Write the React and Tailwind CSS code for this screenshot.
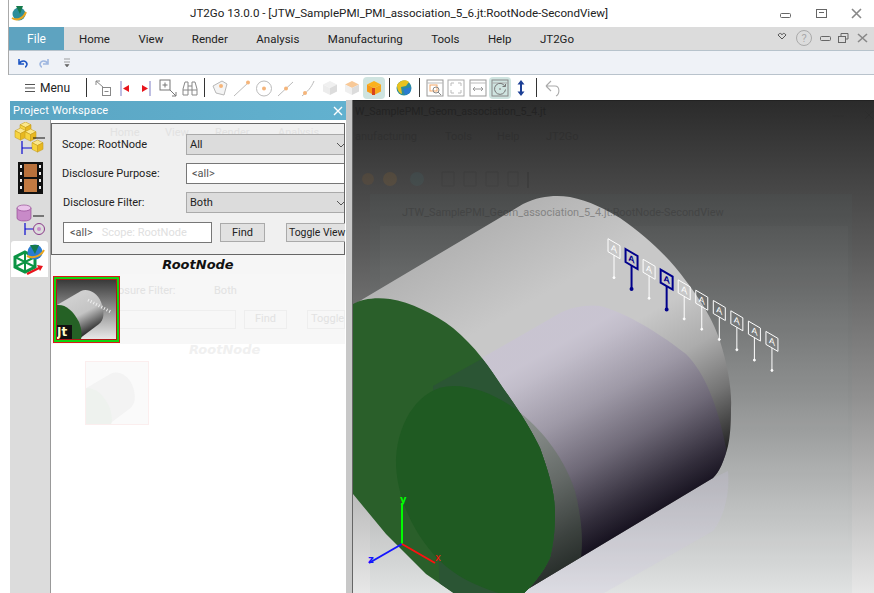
import React from "react";

const tabs = ["Home", "View", "Render", "Analysis", "Manufacturing", "Tools", "Help", "JT2Go"];

function Sep() {
  return <div className="w-px h-[19px] bg-[#333] shrink-0" />;
}

function Tool({ w = 22, active, children, className = "" }) {
  return (
    <div
      className={`h-[22px] shrink-0 flex items-center justify-center rounded-sm ${active ? "bg-[#cfe4e0]" : ""} ${className}`}
      style={{ width: w }}
    >
      <svg width="20" height="20" viewBox="0 0 20 20" fill="none">
        {children}
      </svg>
    </div>
  );
}

function Box({ top, side, front }) {
  return (
    <>
      <path d="M10 3 L17 6.5 L10 10 L3 6.5 Z" fill={top} />
      <path d="M3 6.5 L10 10 V17 L3 13.5 Z" fill={side} />
      <path d="M17 6.5 L10 10 V17 L17 13.5 Z" fill={front} />
    </>
  );
}

function Toolbar() {
  return (
    <div className="h-[25px] bg-white flex items-center pl-[25px] shrink-0">
      <svg width="10" height="10" viewBox="0 0 10 10" className="shrink-0">
        <path d="M0 1.5H10M0 5H10M0 8.5H10" stroke="#555" strokeWidth="1.1" />
      </svg>
      <span className="ml-[5px] w-[40px] text-[12px] text-[#222] shrink-0">Menu</span>
      <div className="ml-[6px]"><Sep /></div>
      <Tool className="ml-[5px]">
        <path d="M3 3l7 6M3 3h4M3 3v4" stroke="#888" strokeWidth="1" />
        <rect x="9.5" y="9.5" width="8" height="8" stroke="#888" />
        <path d="M11.5 13.5h4" stroke="#888" />
      </Tool>
      <Tool className="ml-px">
        <path d="M5 3v15" stroke="#a8a8d8" strokeWidth="1.5" />
        <path d="M13 7v7l-6-3.5z" fill="#e8141c" />
      </Tool>
      <Tool className="-ml-[3px]">
        <path d="M15 3v15" stroke="#a8a8d8" strokeWidth="1.5" />
        <path d="M7 7v7l6-3.5z" fill="#e8141c" />
      </Tool>
      <Tool w={23}>
        <rect x="2" y="2" width="10" height="10" stroke="#777" />
        <path d="M7 4.5v5M4.5 7h5M12 12l6 6M18 14v4h-4" stroke="#777" />
      </Tool>
      <Tool>
        <path d="M3 17v-6l2-7h3v13zM17 17v-6l-2-7h-3v13zM8 8h4M8 12h4M3 12h5M12 12h5" stroke="#888" />
      </Tool>
      <div className="ml-[3px]"><Sep /></div>
      <Tool className="ml-[4px]">
        <path d="M3 8l9-5 5 3-3 11-8-2z" stroke="#b8b8b8" fill="#f4f4f4" />
        <circle cx="11" cy="8" r="2" fill="#f5b57a" />
      </Tool>
      <Tool>
        <path d="M2 18L17 4" stroke="#bbb" />
        <circle cx="16" cy="4.5" r="2" fill="#f5b57a" />
      </Tool>
      <Tool>
        <circle cx="10" cy="10.5" r="7.5" stroke="#bbb" />
        <circle cx="10" cy="10.5" r="2" fill="#f5b57a" />
      </Tool>
      <Tool>
        <path d="M2 18L17 4" stroke="#bbb" />
        <circle cx="10" cy="10.5" r="2" fill="#f5b57a" />
      </Tool>
      <Tool>
        <path d="M4 18C10 13 13 10 16 3" stroke="#bbb" />
        <circle cx="7" cy="15" r="2" fill="#f5b57a" />
      </Tool>
      <Tool><Box top="#f0f0f0" side="#ececec" front="#dcdcdc" /></Tool>
      <Tool><Box top="#f8c998" side="#efefef" front="#dcdcdc" /></Tool>
      <Tool active>
        <path d="M10 3 L17 6.5 L10 10 L3 6.5 Z" fill="#fbb11f" />
        <path d="M3 6.5 L10 10 V17 L3 13.5 Z" fill="#f89a18" />
        <path d="M17 6.5 L10 10 V17 L17 13.5 Z" fill="#f7a81d" />
        <path d="M8 10v7h3v-7z" fill="#d8431c" />
      </Tool>
      <div className="ml-[4px]"><Sep /></div>
      <Tool className="ml-[3px]">
        <circle cx="10" cy="10" r="7.5" fill="#2d8e9a" />
        <path d="M3 7c3-5 9-6 12-3l-3 4-5 1 1 7c-3-1-5-4-5-9z" fill="#e8c21f" />
        <path d="M9 11l8-2-1 6-5 2z" fill="#2a7bd0" />
      </Tool>
      <div className="ml-[4px]"><Sep /></div>
      <Tool className="ml-[4px]">
        <rect x="2" y="2" width="16" height="16" stroke="#999" />
        <path d="M2 5h16" stroke="#bbb" />
        <rect x="5" y="7" width="7" height="6" stroke="#f4a868" />
        <circle cx="11" cy="12" r="3" stroke="#888" />
        <path d="M13 14l3 3" stroke="#888" />
      </Tool>
      <Tool className="-ml-px">
        <rect x="2" y="2" width="16" height="16" stroke="#aaa" />
        <path d="M5 8V5h3M15 8V5h-3M5 12v3h3M15 12v3h-3" stroke="#bbb" />
      </Tool>
      <Tool>
        <rect x="2" y="2" width="16" height="16" stroke="#999" />
        <path d="M2 5h16" stroke="#bbb" />
        <path d="M5 11h10M5 11l2-2M5 11l2 2M15 11l-2-2M15 11l-2 2" stroke="#999" />
      </Tool>
      <Tool active>
        <rect x="2" y="2" width="16" height="16" stroke="#888" />
        <path d="M2 5h16" stroke="#aaa" />
        <path d="M15 8.5a5.5 5.5 0 1 0 .5 3" stroke="#777" />
        <path d="M12.5 8.5H15.5V6" stroke="#777" />
        <circle cx="10" cy="11" r="1" fill="#999" />
      </Tool>
      <Tool className="-ml-px">
        <path d="M10 4v12" stroke="#1c3f95" strokeWidth="2" />
        <path d="M6.5 6.5L10 2l3.5 4.5zM6.5 13.5L10 18l3.5-4.5z" fill="#1c3f95" />
      </Tool>
      <div className="ml-[4px]"><Sep /></div>
      <Tool className="ml-[5px]">
        <path d="M3 8l5-5M3 8l5 5M3 8h9c5 0 5 8 1 10" stroke="#aaa" strokeWidth="1.1" />
      </Tool>
    </div>
  );
}

function Cube({ x, y, s }) {
  // small yellow isometric cube
  return (
    <g transform={`translate(${x} ${y}) scale(${s})`} stroke="#c49a1a" strokeWidth=".5">
      <path d="M0 2.5L5 0l5 2.5L5 5z" fill="#fbe78a" />
      <path d="M0 2.5L5 5v6L0 8.5z" fill="#f7d440" />
      <path d="M10 2.5L5 5v6l5-2.5z" fill="#e8b820" />
    </g>
  );
}

function Sidebar() {
  return (
    <div className="w-[41px] shrink-0 bg-[#dcdcdc] border-r border-[#999] flex flex-col pt-[2px] items-center">
      <svg width="32" height="33" viewBox="0 0 32 33">
        <Cube x={6} y={0} s={1.1} />
        <Cube x={1} y={6} s={1.1} />
        <Cube x={11} y={7} s={1.1} />
        <Cube x={18} y={18} s={1.1} />
        <path d="M8 19v13M8 26h10" stroke="#0a0ad0" strokeWidth="1.2" />
        <path d="M19 16h12" stroke="#111" strokeWidth="1" />
      </svg>
      <svg width="25" height="32" viewBox="0 0 25 32" className="mt-[7px]">
        <rect width="25" height="32" fill="#111" />
        <rect x="6" y="2" width="13" height="13" fill="#b8713c" />
        <rect x="6" y="17" width="13" height="13" fill="#c27a42" />
        <path d="M2 3h2v3H2zM2 10h2v3H2zM2 17h2v3H2zM2 24h2v3H2zM21 3h2v3h-2zM21 10h2v3h-2zM21 17h2v3h-2zM21 24h2v3h-2z" fill="#eee" />
      </svg>
      <svg width="32" height="34" viewBox="0 0 32 34" className="mt-[9px]">
        <path d="M3 5v10c0 4 14 4 14 0V5z" fill="#c88ac8" stroke="#8a3a8a" strokeWidth=".6" />
        <ellipse cx="10" cy="5" rx="7" ry="3" fill="#eac4ea" stroke="#8a3a8a" strokeWidth=".6" />
        <path d="M11 20v12M11 26h8" stroke="#0a0ad0" strokeWidth="1.2" />
        <path d="M19 13h11" stroke="#111" />
        <circle cx="25" cy="26" r="5.5" fill="none" stroke="#8a3a8a" />
        <circle cx="25" cy="26" r="2" fill="#c88ac8" />
      </svg>
      <div className="mt-[4px] w-[37px] h-[36px] bg-white rounded-t-[3px] flex items-center justify-center self-start ml-[1px]">
        <svg width="33" height="34" viewBox="0 0 33 34">
          <path d="M12 10l10 5v10l-10 5-10-5V15z" fill="none" stroke="#0b9444" strokeWidth="3" />
          <path d="M2 15l20 10M22 15L2 25M12 10v20" stroke="#0b9444" strokeWidth="2" />
          <circle cx="22" cy="10" r="7.5" fill="#2a7bd0" />
          <path d="M17 3h9l-4 9z" fill="#157a4c" />
          <path d="M14 14c6 3 14 0 17-6" stroke="#e8a51f" strokeWidth="2" fill="none" />
          <path d="M14 32l12-6" stroke="#e8141c" strokeWidth="2.5" />
          <path d="M24 23l6 1-3 5z" fill="#e8141c" />
        </svg>
      </div>
    </div>
  );
}

function Thumb() {
  return (
    <div className="w-[67px] h-[67px] ml-[2px] mt-[2px] border border-[#d81818] relative">
      <div className="w-full h-full border-2 border-[#0fd40f]">
        <div className="w-full h-full border border-[#b01818] relative overflow-hidden">
          <svg width="59" height="59" viewBox="0 0 59 59" className="block">
            <defs>
              <linearGradient id="tb" x1="0" y1="0" x2="0" y2="1">
                <stop offset="0" stopColor="#3a3a3a" />
                <stop offset="1" stopColor="#e8e8e8" />
              </linearGradient>
              <linearGradient id="tc" x1="0.3" y1="0.1" x2="0.7" y2="0.9">
                <stop offset="0.1" stopColor="#cfcfcf" />
                <stop offset="0.5" stopColor="#c4c4c4" />
                <stop offset="1" stopColor="#222" />
              </linearGradient>
            </defs>
            <rect width="59" height="59" fill="url(#tb)" />
            <path d="M0 25L24 11C30 8 40 12 44 22 C48 32 47 40 42 44L22 59H0Z" fill="url(#tc)" />
            <path d="M0 25C8 24 16 30 22 42 C25 50 25 56 24 59H0Z" fill="#256125" />
            <path d="M31 20L54 32" stroke="#eee" strokeWidth="3" strokeDasharray="1 2" />
          </svg>
          <div className="absolute left-0 bottom-0 w-[15px] h-[14px] bg-[#111] text-[12px] leading-[14px] font-bold text-[#ffffc8] font-['DejaVu_Sans',sans-serif]">Jt</div>
        </div>
      </div>
    </div>
  );
}

function Panel() {
  return (
    <div className="w-[336px] shrink-0 flex flex-col">
      <div className="h-[19px] mt-px bg-gradient-to-r from-[#5aa5c3] to-[#62b1cf] text-white text-[11px] flex items-center justify-between pl-[3px] pr-[3px] shrink-0 tracking-[0.2px]">
        <span className="pt-px">Project Workspace</span>
        <svg width="10" height="10" viewBox="0 0 10 10"><path d="M1 1l8 8M9 1l-8 8" stroke="#fff" strokeWidth="1.4" /></svg>
      </div>
      <div className="flex-1 flex min-h-0">
        <Sidebar />
        <div className="flex-1 bg-white relative">
          <div className="mt-[3px] w-[294px] h-[132px] bg-[#f0f0f0] border border-[#666] text-[11px] text-[#222] relative z-10">
            <span className="absolute left-[58px] top-[3px] leading-none text-[#e2e2e2]">Home</span>
            <span className="absolute left-[113px] top-[3px] leading-none text-[#e2e2e2]">View</span>
            <span className="absolute left-[163px] top-[3px] leading-none text-[#e2e2e2]">Render</span>
            <span className="absolute left-[226px] top-[3px] leading-none text-[#e2e2e2]">Analysis</span>
            <div className="flex items-center mt-[10px] pl-[10px] relative">
              <span className="w-[124px] leading-none">Scope: RootNode</span>
              <div className="flex-1 h-[21px] bg-[#dcdcdc] border border-[#aaa] border-r-0 pl-[3px] pt-px flex items-center justify-between overflow-hidden">
                All
                <svg width="7" height="5" viewBox="0 0 7 5" className="shrink-0"><path d="M0 0l4 4 3-3" stroke="#555" fill="none" /></svg>
              </div>
            </div>
            <div className="flex items-center mt-[8px] pl-[10px] relative">
              <span className="w-[124px] pt-px">Disclosure Purpose:</span>
              <div className="flex-1 h-[21px] bg-white border border-[#777] border-r-0 pl-[5px] pt-px flex items-center text-[#555]">&lt;all&gt;</div>
            </div>
            <div className="flex items-center mt-[8px] pl-[11px] relative">
              <span className="w-[123px] pt-[2px]">Disclosure Filter:</span>
              <div className="flex-1 h-[21px] bg-[#dcdcdc] border border-[#aaa] border-r-0 pl-[3px] pt-px flex items-center justify-between overflow-hidden">
                Both
                <svg width="7" height="5" viewBox="0 0 7 5" className="shrink-0"><path d="M0 0l4 4 3-3" stroke="#555" fill="none" /></svg>
              </div>
            </div>
            <div className="flex items-center mt-[9px] pl-[11px] relative">
              <div className="w-[149px] shrink-0 h-[21px] bg-white border border-[#777] pl-[6px] pt-px flex items-center text-[#555] gap-[9px] whitespace-nowrap">
                &lt;all&gt;<span className="text-[#e0e0e0]">Scope: RootNode</span>
              </div>
              <div className="ml-[8px] w-[45px] shrink-0 h-[19px] bg-[#e1e1e1] border border-[#aaa] pt-px flex items-center justify-center">Find</div>
              <div className="ml-[21px] flex-1 h-[19px] bg-[#e1e1e1] border border-[#aaa] border-r-0 pl-[2px] pt-px flex items-center whitespace-nowrap text-[10.4px]">Toggle View</div>
            </div>
          </div>
          <div className="h-[19px] w-[294px] bg-[#f6f6f6] flex items-center justify-center text-[13px] font-bold italic text-[#111] font-['DejaVu_Sans',sans-serif] relative z-10">RootNode</div>
          <div className="relative z-10"><Thumb /></div>
          <Ghost />
        </div>
      </div>
    </div>
  );
}

// faint copy of the other window showing through the panel
function Ghost() {
  return (
    <div className="absolute left-0 top-[154px] w-[294px] h-[70px] bg-[#f7f7f7] text-[11px] text-[#e2e2e2]">
      <span className="absolute left-[43px] top-[9px]">Disclosure Filter:</span>
      <span className="absolute left-[163px] top-[9px]">Both</span>
      <div className="absolute left-[51px] top-[36px] w-[134px] h-[19px] border border-[#eee]" />
      <div className="absolute left-[193px] top-[36px] w-[43px] h-[19px] border border-[#eee] flex items-center justify-center">Find</div>
      <div className="absolute left-[256px] top-[36px] w-[38px] h-[19px] border border-[#eee] pl-[3px] flex items-center">Toggle</div>
      <span className="absolute left-[138px] top-[66px] text-[13px] font-bold italic text-[#f0f0f0] font-['DejaVu_Sans',sans-serif]">RootNode</span>
      <div className="absolute left-[34px] top-[87px] w-[64px] h-[64px] border border-[#fbeeee] bg-[#fafafa] overflow-hidden">
        <svg width="62" height="62" viewBox="0 0 59 59" className="block">
          <path d="M0 25L24 11C30 8 40 12 44 22 C48 32 47 40 42 44L22 59H0Z" fill="#f3f3f3" />
          <path d="M0 25C8 24 16 30 22 42 C25 50 25 56 24 59H0Z" fill="#eef2ee" />
        </svg>
      </div>
    </div>
  );
}

const markers = [0, 1, 2, 3, 4, 5, 6, 7, 8, 9];

const bodyPath =
  "M353 304L363 298L523 203C540 195 555 194 570 196C590 200 605 208 620 217C650 238 670 258 686 280C705 305 714 322 720 340C728 365 732 390 731 407C731 425 730 435 728 445C724 460 720 470 713 477L523 591L440 420Z";
const greenPath =
  "M353 303C362 298 375 296 390 298C410 301 435 313 453 327C475 345 490 367 503 387C520 410 532 430 540 447C548 470 555 490 555 513C555 530 553 545 550 557C543 572 532 585 523 593H455L426 573L386 533L353 493Z";
const ghostCap =
  "M453 385C420 385 398 420 396 457C395 490 410 530 440 560C470 590 540 610 570 590C585 565 585 530 575 490C555 430 500 385 453 385Z";

function Scene() {
  return (
    <svg width="521" height="493" viewBox="353 100 521 493" className="block">
      <defs>
        <linearGradient id="bg" x1="0" y1="0" x2="0" y2="1">
          <stop offset="0" stopColor="#2b2b2b" />
          <stop offset="0.3" stopColor="#5a5a5a" />
          <stop offset="0.6" stopColor="#909090" />
          <stop offset="1" stopColor="#e8e8e8" />
        </linearGradient>
        <linearGradient id="body" gradientUnits="userSpaceOnUse" x1="450" y1="250" x2="616" y2="544">
          <stop offset="0" stopColor="#b4b4b4" />
          <stop offset="0.25" stopColor="#c8c8c8" />
          <stop offset="0.45" stopColor="#c8c8c8" />
          <stop offset="0.6" stopColor="#acacac" />
          <stop offset="0.75" stopColor="#747474" />
          <stop offset="0.9" stopColor="#2a2a2a" />
          <stop offset="1" stopColor="#040404" />
        </linearGradient>
        <linearGradient id="ghost" gradientUnits="userSpaceOnUse" x1="450" y1="250" x2="616" y2="544">
          <stop offset="0.4" stopColor="#c9c1d8" />
          <stop offset="0.75" stopColor="#6a607a" />
          <stop offset="1" stopColor="#181028" />
        </linearGradient>
        <clipPath id="bodyClip"><path d={bodyPath} /></clipPath>
        <clipPath id="greenClip"><path d={greenPath} /></clipPath>
      </defs>
      <rect x="353" y="100" width="521" height="493" fill="url(#bg)" />
      <rect x="370" y="193" width="482" height="400" fill="#6a8a90" opacity="0.05" />
      <rect x="380" y="225" width="468" height="368" fill="#ffffff" opacity="0.02" />
      <path d="M713 477L728 470C730 490 725 515 713 530L590 600H560L523 591Z" fill="#cdc6e2" opacity="0.22" />
      <path d={bodyPath} fill="url(#body)" />
      <g clipPath="url(#bodyClip)">
        <path d="M433 385L560 312C570 306 590 303 600 305C620 310 650 325 686 353C705 372 718 405 726 447C728 470 722 490 713 498L586 570L560 600H440Z" fill="url(#ghost)" opacity="0.55" />
        <path d={ghostCap} fill="#4f6a48" opacity="0.35" />
      </g>
      <path d={greenPath} fill="#2a5f2a" />
      <g clipPath="url(#greenClip)">
        <path d="M433 385L505 345L560 470V600H440Z" fill="#2b5534" />
        <path d={ghostCap} fill="#1f5a22" />
      </g>
      <g opacity="0.13">
        <circle cx="368" cy="178" r="6" fill="#a86a20" />
        <circle cx="390" cy="178" r="7" fill="#c07a20" />
        <circle cx="417" cy="178" r="7" fill="#3f7a80" />
        <path d="M528 171v16" stroke="#111" strokeWidth="2" />
        <path d="M442 171h12v14h-12zM464 171h12v14h-12zM486 171h12v14h-12zM508 171h10v14h-10z" stroke="#222" fill="none" />
        <path d="M832 115h12M865 110l8 8M873 110l-8 8" stroke="#222" fill="none" />
      </g>
      {markers.map((i) => {
        const blue = i === 1 || i === 3;
        const c = blue ? "#00008b" : "#fff";
        const x = 614 + i * 17.55;
        const y = 247.7 + i * 10.3;
        return (
          <g key={i} transform={`translate(${x} ${y})`} stroke={c} strokeWidth={blue ? 2 : 1} fill="none">
            <path d="M-6-10L6-3V10L-6 3Z" />
            <path d={`M0 6.5V${blue ? 30 : 29}`} />
            <circle cx="0" cy={blue ? 30 : 29} r="1" fill={c} />
            <text
              x="0"
              y="3"
              transform="skewY(30)"
              textAnchor="middle"
              fontSize="9"
              fontFamily="Liberation Sans, sans-serif"
              fontWeight={blue ? 700 : 400}
              fill={c}
              stroke="none"
            >
              A
            </text>
          </g>
        );
      })}
      <path d="M402 543V502" stroke="#00ff00" strokeWidth="2" />
      <path d="M402 543L369 562" stroke="#1414ff" strokeWidth="2" />
      <path d="M402 543L435 562" stroke="#ff1010" strokeWidth="2" />
      <text x="400" y="502" fontSize="10" fontWeight="700" fontFamily="DejaVu Sans, sans-serif" fill="#00ff00">y</text>
      <text x="368" y="562" fontSize="10" fontWeight="700" fontFamily="DejaVu Sans, sans-serif" fill="#1414ff">z</text>
      <text x="435" y="560" fontSize="10" fontFamily="DejaVu Sans, sans-serif" fill="#ff1010">x</text>
    </svg>
  );
}

function Viewport() {
  return (
    <div className="flex-1 relative overflow-hidden border-t border-[#222]">
      <Scene />
      <span className="absolute left-[2px] top-[3px] text-[10.6px] text-[#1c1c1c] opacity-60 whitespace-nowrap">W_SamplePMI_Geom_association_5_4.jt</span>
      <span className="absolute left-[2px] top-[28px] text-[11px] text-[#222] opacity-30 whitespace-nowrap">anufacturing</span>
      <span className="absolute left-[92px] top-[28px] text-[11px] text-[#222] opacity-30">Tools</span>
      <span className="absolute left-[144px] top-[28px] text-[11px] text-[#222] opacity-30">Help</span>
      <span className="absolute left-[193px] top-[28px] text-[11px] text-[#222] opacity-30">JT2Go</span>
      <span className="absolute left-[49px] top-[104px] text-[10.85px] text-[#333] opacity-40 whitespace-nowrap">JTW_SamplePMI_Geom_association_5_4.jt:RootNode-SecondView</span>
    </div>
  );
}

export default function App() {
  return (
    <div className="w-[874px] h-[593px] overflow-hidden bg-white flex font-['Roboto',sans-serif]">
      <div className="w-[9px] shrink-0 border-r border-[#aaa] bg-white" />
      <div className="flex-1 flex flex-col min-w-0">
        <div className="h-[27px] flex items-center shrink-0 relative pt-px">
          <svg width="16" height="16" viewBox="0 0 16 16" className="ml-[2px]">
            <circle cx="8" cy="8" r="6.5" fill="#2d8e9a" />
            <path d="M1 12c5 3 11 1 14-6" stroke="#e8a51f" strokeWidth="2" fill="none" />
            <path d="M5 0h7l-3 8z" fill="#157a4c" />
          </svg>
          <span className="ml-[163px] text-[11.6px] text-[#222] whitespace-nowrap">JT2Go 13.0.0 - [JTW_SamplePMI_PMI_association_5_6.jt:RootNode-SecondView]</span>
          <svg width="90" height="12" viewBox="0 0 90 12" className="absolute left-[771px] top-[8px]">
            <rect x="0.5" y="5.5" width="10" height="4" rx="1" fill="none" stroke="#666" />
            <rect x="36.5" y="1.5" width="10" height="8" fill="none" stroke="#666" />
            <path d="M39 4.5h5" stroke="#666" />
            <path d="M72 1l9 9M81 1l-9 9" stroke="#888" strokeWidth="1.6" />
          </svg>
        </div>
        <div className="h-[24px] bg-[#dcdcdc] border-b border-[#b7c3cc] flex items-center shrink-0 text-[11.5px] text-[#222] relative">
          <div className="w-[55px] h-full bg-[#5ea3c0] text-white text-[12px] flex items-center justify-center">File</div>
          <div className="ml-[15px] flex gap-[28.5px] pt-[2px]">
            {tabs.map((t) => (
              <span key={t}>{t}</span>
            ))}
          </div>
          <svg width="96" height="18" viewBox="0 0 96 18" className="absolute left-[768px] top-[2px]">
            <path d="M1 6c2-3 4-1 4 0 0-1 2-3 4 0l-4 4z" fill="none" stroke="#555" />
            <circle cx="27" cy="9" r="7.5" fill="none" stroke="#aaa" />
            <text x="27" y="13" textAnchor="middle" fontSize="11" fill="#aaa" fontFamily="Roboto, sans-serif">?</text>
            <rect x="43.5" y="7.5" width="10" height="4" rx="1" fill="none" stroke="#666" />
            <rect x="61.5" y="7.5" width="7" height="6" fill="none" stroke="#666" />
            <path d="M64 7V4.5h7V10h-2" fill="none" stroke="#666" />
            <path d="M81 5l9 8M90 5l-9 8" stroke="#888" strokeWidth="1.6" />
          </svg>
        </div>
        <div className="h-[24px] bg-[#eff2f7] border-b border-[#b9c3cc] flex items-center shrink-0 pl-[8px]">
          <svg width="62" height="12" viewBox="0 0 62 12">
            <path d="M2 2v5h5M2 7c2-4 7-4 8 0 0 1-1 3-2 3" fill="none" stroke="#1d55c4" strokeWidth="1.6" />
            <path d="M31 2v5h-5M31 7c-2-4-7-4-8 0 0 1 1 3 2 3" fill="none" stroke="#9fb7e0" strokeWidth="1.6" />
            <path d="M47 2h6M47 5h6M48 7.5h4l-2 2.5z" fill="#666" stroke="#666" strokeWidth=".6" />
          </svg>
        </div>
        <div className="-ml-[9px]"><Toolbar /></div>
        <div className="flex-1 flex min-h-0 -ml-px">
          <div className="flex-1 flex min-h-0">
            <div className="w-[2px] shrink-0 bg-white" />
            <Panel />
            <div className="w-[7px] shrink-0 bg-[#c8c8c8] border-r border-[#666]" />
            <Viewport />
          </div>
        </div>
      </div>
    </div>
  );
}
